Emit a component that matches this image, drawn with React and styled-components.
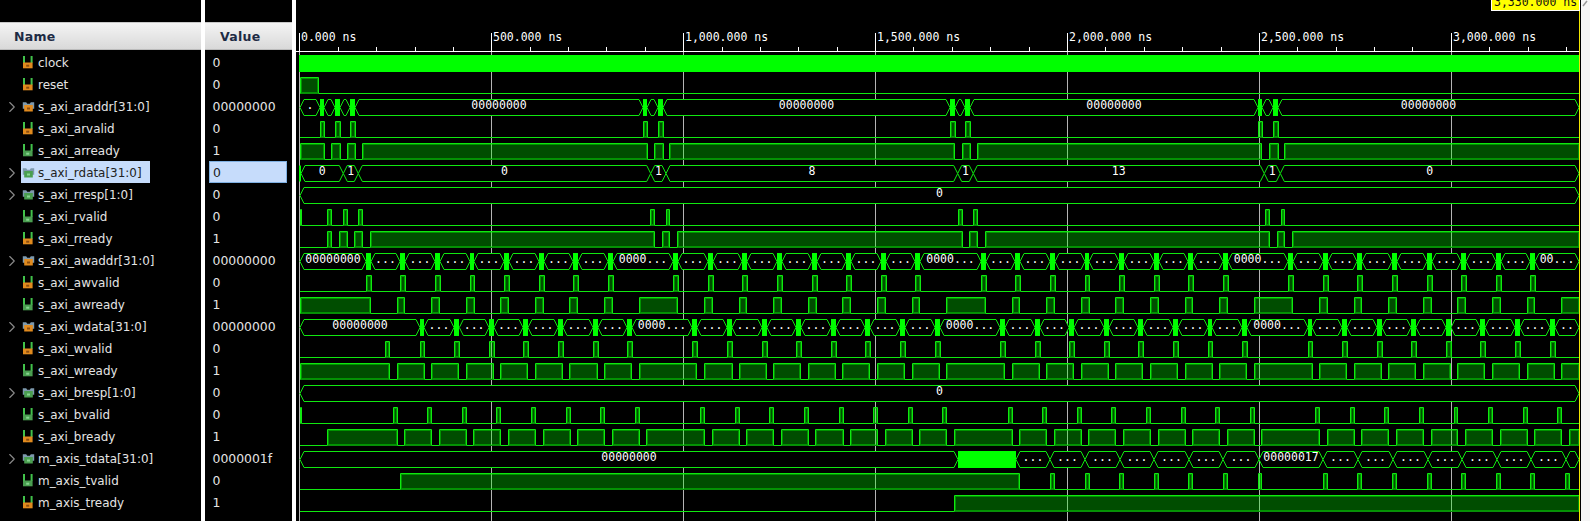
import React from 'react';
import styled, { createGlobalStyle } from 'styled-components';
import { ChevronRight } from 'lucide-react';

const Global = createGlobalStyle`
  html, body { margin: 0; padding: 0; background: #000; overflow: hidden; }
  #root { width: 1590px; height: 521px; }
`;

const Page = styled.div`
  width: 1590px; height: 521px; background: #000; overflow: hidden;
  display: grid; grid-template-columns: 201px 4px 87px 4px 1285px 9px;
  font-family: "DejaVu Sans", sans-serif;
`;
const Column = styled.div`
  display: flex; flex-direction: column; padding-top: 22px; min-width: 0;
`;
const Gutter = styled.div`background: #fff;`;
const EndStrip = styled.div`
  background: #f6f6f6; display: flex; justify-content: center; align-items: flex-start;
`;
const Header = styled.div`
  height: 28px; box-sizing: border-box; flex: none;
  background: linear-gradient(#f4f4f4, #d9d9d9);
  border-top: 1px solid #c8c8c8; border-bottom: 1px solid #bbb;
  display: flex; align-items: center; padding-left: ${p => p.$indent}px;
  font-weight: bold; font-size: 12.5px; letter-spacing: .3px; color: #1d2b44;
`;
const Body = styled.div`
  display: flex; flex-direction: column; padding-top: 1px;
`;
const NameRow = styled.div`
  height: 22px; flex: none; display: flex; align-items: center;
  font-size: 11.95px; color: #e4e4e4; padding-left: 3px;
`;
const Chevron = styled.span`
  width: 19px; flex: none; display: flex; align-items: center; color: #8a8a8a; padding-top: 1px;
`;
const NameCell = styled.div`
  display: flex; align-items: center; height: 22px; box-sizing: border-box; gap: 3px;
  margin-left: -1px; padding: 0 1px;
  width: ${p => (p.$selected ? '129px' : 'auto')};
  background: ${p => (p.$selected ? '#c6dcfb' : 'transparent')};
  color: ${p => (p.$selected ? '#222' : 'inherit')};
`;
const NameText = styled.span`padding-top: 2px;`;
const IconBox = styled.svg`width: 13px; height: 15px; flex: none;`;
const ValueRow = styled.div`
  height: 22px; flex: none; box-sizing: border-box; display: flex; align-items: center;
  font-size: 12.4px; color: #e4e4e4; padding-left: 7.5px;
`;
const ValueText = styled.span`padding-top: 1px;`;
const SelectedValue = styled.div`
  width: 78px; height: 22px; box-sizing: border-box; margin-left: -4px; padding-left: 3.5px;
  display: flex; align-items: center; color: #222;
  background: #c6dcfb; border: 1px solid #7fb0e2;
`;
const WaveSvg = styled.svg`display: block; width: 1285px; height: 521px;`;
const Mono = styled.text`
  font-family: "DejaVu Sans Mono", monospace; font-size: 11.5px; fill: #fff;
`;
const Grid = styled.line`stroke: #b4b4b4; stroke-width: 1;`;
const Tick = styled.line`stroke: #fff; stroke-width: 1;`;
const HighFill = styled.rect`fill: rgba(0, 255, 0, .3);`;
const HighInner = styled.rect`fill: none; stroke: rgba(0, 255, 0, .4); stroke-width: 1;`;
const Trace = styled.path`fill: none; stroke: #10e810; stroke-width: 1;`;
const HighBase = styled.line`stroke: #0a8c0a; stroke-width: 1;`;
const Hex = styled.polygon`fill: #000; stroke: #10e810; stroke-width: 1;`;
const Solid = styled.rect`fill: #00ff00;`;
const Cursor = styled.rect`fill: #ffff00; stroke: #fff; stroke-width: 1;`;
const CursorText = styled.text`
  font-family: "DejaVu Sans Mono", monospace; font-size: 11.5px; fill: #111;
`;
const CursorLine = styled.line`stroke: #f2e600; stroke-width: 1;`;

const START = 300, END = 1579;
const at = (base, list) => list.map(([a, b]) => [base + a / 3, base + b / 3]);
const Z7 = 290, Z8 = 730, Z9 = 1160;

const arBursts = [[320, 324], [335, 340], [350, 355], [643, 647], [658, 663], [950, 955], [965, 970], [1258, 1262], [1273, 1278]];

const awBursts = [
  ...at(Z7, [[228, 243], [330, 345], [435, 450], [540, 552], [642, 657], [747, 762], [849, 864], [954, 969], [1149, 1164], [1254, 1269]]),
  ...at(Z8, [[36, 51], [141, 156], [246, 261], [348, 363], [453, 468], [555, 570], [753, 768], [855, 870], [960, 975], [1065, 1077], [1167, 1182], [1272, 1287]]),
  ...at(Z9, [[84, 99], [189, 204], [384, 399], [489, 504], [591, 606], [696, 711], [801, 816], [903, 918], [1008, 1023], [1110, 1125]]),
];
const wBursts = [
  ...at(Z7, [[390, 402], [492, 508], [597, 612], [699, 714], [804, 819], [909, 924], [1011, 1026], [1206, 1221], [1311, 1326]]),
  ...at(Z8, [[96, 111], [198, 213], [303, 318], [405, 420], [510, 525], [615, 630], [810, 825], [915, 930], [1017, 1032], [1122, 1137], [1224, 1239]]),
  ...at(Z9, [[39, 54], [144, 156], [246, 261], [444, 456], [546, 561], [651, 666], [753, 768], [858, 873], [960, 975], [1065, 1080], [1170, 1185]]),
];
const wvalid = [[385, 389.7], ...wBursts];
const awready = [
  ...at(Z7, [[30, 242], [321, 344], [423, 449], [528, 552], [630, 656], [735, 761], [837, 863], [942, 968], [1047, 1163], [1242, 1268]]),
  ...at(Z8, [[27, 50], [129, 155], [234, 258], [336, 362], [441, 467], [546, 569], [648, 767], [846, 869], [948, 974], [1053, 1077], [1155, 1181], [1260, 1286]]),
  ...at(Z9, [[75, 98], [177, 203], [282, 398], [477, 503], [582, 605], [684, 710], [789, 815], [891, 917], [996, 1022], [1101, 1124], [1204, 1257]]),
];
const wready = [
  ...at(Z7, [[30, 299], [321, 402], [423, 506], [528, 611], [630, 713], [735, 818], [837, 921], [942, 1025], [1047, 1220], [1242, 1326]]),
  ...at(Z8, [[27, 110], [129, 212], [234, 317], [336, 419], [441, 524], [546, 629], [648, 824], [846, 927], [948, 1031], [1053, 1136], [1155, 1238]]),
  [1150, 1177.7],
  ...at(Z9, [[75, 156], [177, 260], [282, 456], [477, 560], [582, 665], [684, 767], [789, 872], [891, 974], [996, 1079], [1101, 1184], [1204, 1257]]),
];
const bvalid = [
  [300, 301],
  ...at(Z7, [[309, 323], [411, 425], [516, 530], [618, 632], [723, 737], [828, 840], [930, 944], [1035, 1049], [1230, 1244]]),
  ...at(Z8, [[15, 29], [117, 131], [222, 236], [327, 339], [429, 443], [534, 548], [636, 650], [834, 848], [936, 950], [1041, 1055], [1143, 1157], [1248, 1262]]),
  ...at(Z9, [[63, 77], [165, 179], [270, 284], [465, 479], [570, 584], [672, 686], [777, 791], [882, 893], [984, 998], [1089, 1103], [1191, 1205]]),
];
const bready = [
  ...at(Z7, [[111, 323], [342, 425], [447, 530], [549, 632], [654, 737], [759, 840], [861, 944], [966, 1049], [1068, 1244]]),
  [712, 739.7],
  ...at(Z8, [[48, 131], [153, 236], [255, 339], [360, 443], [465, 548], [567, 650], [672, 848], [867, 950], [972, 1055], [1074, 1157], [1179, 1262]]),
  [1158, 1185.7],
  ...at(Z9, [[96, 179], [201, 284], [303, 479], [501, 584], [603, 686], [708, 791], [813, 893], [915, 998], [1020, 1103], [1122, 1205], [1227, 1257]]),
];
const tvalid = [
  [400, 1019.3],
  ...at(Z8, [[960, 974], [1065, 1077], [1167, 1181], [1272, 1286]]),
  ...at(Z9, [[84, 98], [189, 203], [294, 305], [489, 503], [591, 605], [696, 710], [801, 815], [903, 917], [1008, 1022], [1110, 1124], [1215, 1229]]),
];
const cross = x => [x, x];

const signals = [
  { name: 'clock', value: '0', dir: 'in', wave: { kind: 'clock' } },
  { name: 'reset', value: '0', dir: 'in', wave: { kind: 'bit', high: [[300, 318.7]] } },
  { name: 's_axi_araddr[31:0]', value: '00000000', dir: 'in', bus: true,
    wave: { kind: 'bus', marks: arBursts, values: () => '00000000' } },
  { name: 's_axi_arvalid', value: '0', dir: 'in', wave: { kind: 'bit', high: arBursts } },
  { name: 's_axi_arready', value: '1', dir: 'out', wave: { kind: 'bit', high: [[300, 324], [331.3, 340], [347.3, 355], [362, 647], [654.3, 663], [669.3, 954], [962.3, 970], [977.3, 1261], [1269.3, 1278], [1284.3, END]] } },
  { name: 's_axi_rdata[31:0]', value: '0', dir: 'out', bus: true, selected: true,
    wave: { kind: 'bus', start: 301, lead: true, marks: [343.3, 358.3, 650.7, 666, 957.7, 973.3, 1264.3, 1280.3].map(cross),
      values: i => ['0', '1', '0', '1', '8', '1', '13', '1', '0'][i] } },
  { name: 's_axi_rresp[1:0]', value: '0', dir: 'out', bus: true, wave: { kind: 'bus', marks: [], values: () => '0' } },
  { name: 's_axi_rvalid', value: '0', dir: 'out', wave: { kind: 'bit', high: [[300, 301], [327.3, 331.7], [343.3, 347.7], [358.3, 362.7], [650.3, 654.7], [666.3, 669.7], [958.3, 962.3], [973.3, 977.7], [1265.3, 1269.3], [1281.3, 1284.7]] } },
  { name: 's_axi_rready', value: '1', dir: 'in', wave: { kind: 'bit', high: [[327.3, 331.7], [339.3, 347.7], [354.3, 362.7], [370.7, 654.3], [662.3, 669.7], [677.7, 962.3], [969.7, 977.7], [985.7, 1269.3], [1277.3, 1284.7], [1292.7, END]] } },
  { name: 's_axi_awaddr[31:0]', value: '00000000', dir: 'in', bus: true, wave: { kind: 'bus', marks: awBursts, values: () => '00000000' } },
  { name: 's_axi_awvalid', value: '0', dir: 'in', wave: { kind: 'bit', high: awBursts } },
  { name: 's_axi_awready', value: '1', dir: 'out', wave: { kind: 'bit', high: awready } },
  { name: 's_axi_wdata[31:0]', value: '00000000', dir: 'in', bus: true, wave: { kind: 'bus', marks: wBursts, values: () => '00000000' } },
  { name: 's_axi_wvalid', value: '0', dir: 'in', wave: { kind: 'bit', high: wvalid } },
  { name: 's_axi_wready', value: '1', dir: 'out', wave: { kind: 'bit', high: wready } },
  { name: 's_axi_bresp[1:0]', value: '0', dir: 'out', bus: true, wave: { kind: 'bus', marks: [], values: () => '0' } },
  { name: 's_axi_bvalid', value: '0', dir: 'out', wave: { kind: 'bit', high: bvalid } },
  { name: 's_axi_bready', value: '1', dir: 'in', wave: { kind: 'bit', high: bready } },
  { name: 'm_axis_tdata[31:0]', value: '0000001f', dir: 'out', bus: true,
    wave: { kind: 'bus', marks: [[958, 1016], ...[1050, 1085, 1120, 1154, 1189, 1223, 1259, 1323, 1358, 1393, 1428, 1462, 1497, 1531, 1566].map(cross)],
      values: i => (i === 8 ? '00000017' : '00000000') } },
  { name: 'm_axis_tvalid', value: '0', dir: 'out', wave: { kind: 'bit', high: tvalid } },
  { name: 'm_axis_tready', value: '1', dir: 'in', wave: { kind: 'bit', high: [[954.3, END]] } },
];

const CHAR = 6.9;
const fit = (value, width) => {
  const n = Math.floor((width - 8) / CHAR);
  if (value.length <= n) return value;
  if (n <= 0) return '';
  if (n <= 2) return '.'.repeat(n);
  if (n <= 4) return '...';
  return value.slice(0, n - 3) + '...';
};
const px = x => Math.floor(x + 0.2) + 0.5;

function BitWave({ top, high }) {
  const bottom = top + 16;
  let d = '';
  const spans = [...high].sort((a, b) => a[0] - b[0]).map(([a, b]) => [px(a), px(b)]);
  let cursor = START;
  spans.forEach(([a, b]) => {
    d += `M${cursor} ${bottom}L${a} ${bottom}L${a} ${top}L${b} ${top}L${b} ${bottom}`;
    cursor = b;
  });
  d += `M${cursor} ${bottom}L${END} ${bottom}`;
  return (
    <g>
      {spans.map(([a, b], i) => (
        <g key={i}>
          <HighFill x={a} y={top} width={Math.max(b - a, 1)} height={16} />
          {b - a > 2 && <HighInner x={a + 1} y={top + 1} width={b - a - 2} height={14} />}
        </g>
      ))}
      <Trace d={d} />
      {spans.map(([a, b], i) => (
        <HighBase key={i} x1={a + 0.5} x2={b - 0.5} y1={bottom} y2={bottom} />
      ))}
    </g>
  );
}

function BusWave({ top, marks, values, start = START, lead }) {
  const c = 4;
  const bottom = top + 16, mid = top + 8;
  const hexes = [];
  let left = start;
  [...marks, [END, END]].forEach(([a, b]) => {
    hexes.push([left, a]);
    left = b;
  });
  return (
    <g>
      {hexes.map(([a, b], i) => {
        const ch = Math.min(c, (b - a) / 2);
        const points = `${a},${mid} ${a + ch},${top} ${b - ch},${top} ${b},${mid} ${b - ch},${bottom} ${a + ch},${bottom}`;
        return <Hex key={i} points={points} />;
      })}
      {lead && <Solid x={299} y={top} width={2} height={16} />}
      {marks.filter(([a, b]) => b > a).map(([a, b], i) => (
        <Solid key={i} x={Math.round(a)} y={top - 0.5} width={Math.round(b - a)} height={17} />
      ))}
      {hexes.map(([a, b], i) => {
        const label = fit(values(i), b - a);
        return label ? <Mono key={i} x={(a + b) / 2} y={top + 9.5} textAnchor="middle">{label}</Mono> : null;
      })}
    </g>
  );
}

const majors = [['0.000 ns', 0], ['500.000 ns', 500], ['1,000.000 ns', 1000], ['1,500.000 ns', 1500], ['2,000.000 ns', 2000], ['2,500.000 ns', 2500], ['3,000.000 ns', 3000]];
const tx = t => 299.7 + 0.3838 * t;

function Waves() {
  const minors = [];
  for (let t = 100; t < 3330; t += 100) if (t % 500) minors.push(t);
  return (
    <WaveSvg viewBox="296 0 1285 521">
      {majors.map(([, t]) => <Grid key={t} x1={px(tx(t))} x2={px(tx(t))} y1={52} y2={521} />)}
      <Tick x1={296} x2={1579} y1={51.5} y2={51.5} />
      {minors.map(t => <Tick key={t} x1={px(tx(t))} x2={px(tx(t))} y1={47} y2={51} />)}
      {majors.map(([label, t]) => (
        <g key={t}>
          <Tick x1={px(tx(t))} x2={px(tx(t))} y1={33} y2={51} />
          <Mono x={px(tx(t)) + 1.5} y={41}>{label}</Mono>
        </g>
      ))}
      {signals.map((s, i) => {
        const top = 55.5 + 22 * i;
        if (s.wave.kind === 'clock') return <Solid key={i} x={299} y={55} width={1280} height={17} />;
        if (s.wave.kind === 'bit') return <BitWave key={i} top={top} high={s.wave.high} />;
        return <BusWave key={i} top={top} {...s.wave} />;
      })}
      <CursorLine x1={1579.5} x2={1579.5} y1={11} y2={521} />
      <Cursor x={1491.5} y={-2} width={88} height={12.5} />
      <CursorText x={1494} y={6}>3,330.000 ns</CursorText>
    </WaveSvg>
  );
}

function SignalIcon({ dir, bus }) {
  const body = dir === 'in' ? '#e08a1e' : '#4a9e50';
  const mark = dir === 'in' ? '#8a4d10' : '#86d48f';
  return (
    <IconBox viewBox="0 0 13 15">
      {bus ? (
        <path d="M0.800 3.200h3.400l1 1.500h2.600l1-1.500h3.400v6.500H0.800z" fill="#7d99ad" />
      ) : (
        <path d="M2 1v7M9.600 1v7" stroke="#41c24a" strokeWidth="2" fill="none" />
      )}
      <rect x={bus ? 2.2 : 1} y={bus ? 6 : 7.5} width={bus ? 8.6 : 9.6} height={bus ? 6.5 : 5.8} fill={body} />
      <rect x={bus ? 5 : 4.2} y={bus ? 8.5 : 9.7} width="3" height="2" fill={mark} />
    </IconBox>
  );
}

export default function App() {
  return (
    <Page>
      <Global />
      <Column>
        <Header $indent={14}>Name</Header>
        <Body>
          {signals.map(s => (
            <NameRow key={s.name}>
              <Chevron>{s.bus && <ChevronRight size={18} strokeWidth={1.5} />}</Chevron>
              <NameCell $selected={s.selected}>
                <SignalIcon dir={s.dir} bus={s.bus} />
                <NameText>{s.name}</NameText>
              </NameCell>
            </NameRow>
          ))}
        </Body>
      </Column>
      <Gutter />
      <Column>
        <Header $indent={15}>Value</Header>
        <Body>
          {signals.map(s => (
            <ValueRow key={s.name}>
              {s.selected ? <SelectedValue><ValueText>{s.value}</ValueText></SelectedValue> : <ValueText>{s.value}</ValueText>}
            </ValueRow>
          ))}
        </Body>
      </Column>
      <Gutter />
      <Waves />
      <EndStrip>
        <svg width="8" height="8" viewBox="0 0 8 8"><path d="M1 6L5 1" stroke="#999" strokeWidth="1.500" /></svg>
      </EndStrip>
    </Page>
  );
}
